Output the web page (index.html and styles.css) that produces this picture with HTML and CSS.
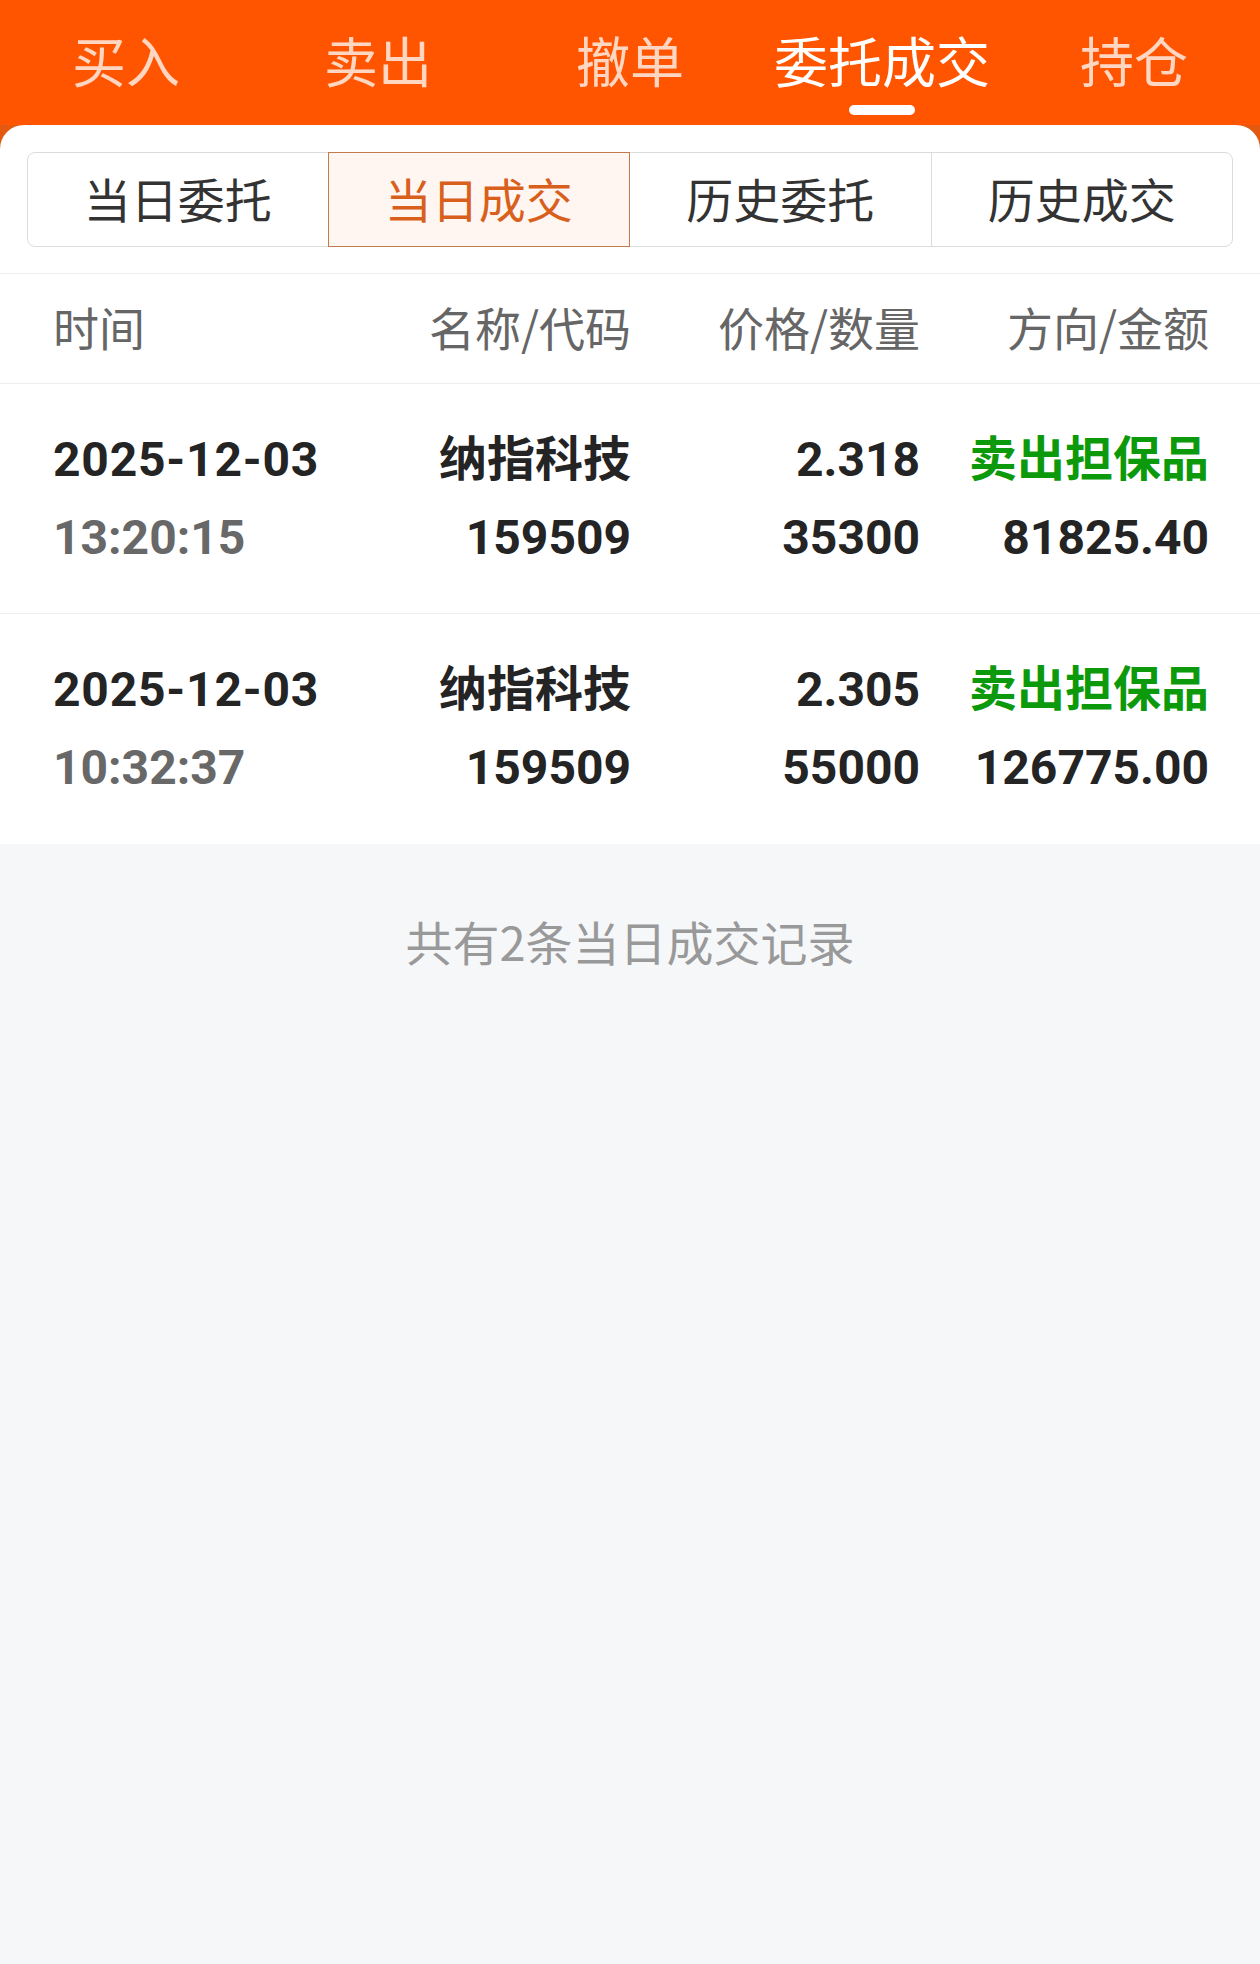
FILE: index.html
```html
<!DOCTYPE html>
<html lang="zh-CN">
<head>
    <meta charset="UTF-8">
    <meta name="viewport" content="width=device-width, initial-scale=1.0">
    <title>委托成交</title>
    <link rel="stylesheet" href="styles.css">
</head>
<body>
    <div class="trade-tabs">
        <div class="trade-tab">买入</div>
        <div class="trade-tab">卖出</div>
        <div class="trade-tab">撤单</div>
        <div class="trade-tab active">委托成交</div>
        <div class="trade-tab">持仓</div>
    </div>

    <div class="card-wrap">
        <div class="card">
            <div class="segment-bar">
                <div class="segment">
                    <div class="segment-item">当日委托</div>
                    <div class="segment-item active">当日成交</div>
                    <div class="segment-item">历史委托</div>
                    <div class="segment-item">历史成交</div>
                </div>
            </div>

            <div class="table-head">
                <div>时间</div>
                <div class="right">名称/代码</div>
                <div class="right">价格/数量</div>
                <div class="right">方向/金额</div>
            </div>

            <div class="deal-row">
                <div class="cell">
                    <div class="strong date">2025-12-03</div>
                    <div class="muted">13:20:15</div>
                </div>
                <div class="cell right">
                    <div class="strong">纳指科技</div>
                    <div class="strong">159509</div>
                </div>
                <div class="cell right">
                    <div class="strong">2.318</div>
                    <div class="strong">35300</div>
                </div>
                <div class="cell right">
                    <div class="strong sell">卖出担保品</div>
                    <div class="strong">81825.40</div>
                </div>
            </div>

            <div class="deal-row">
                <div class="cell">
                    <div class="strong date">2025-12-03</div>
                    <div class="muted">10:32:37</div>
                </div>
                <div class="cell right">
                    <div class="strong">纳指科技</div>
                    <div class="strong">159509</div>
                </div>
                <div class="cell right">
                    <div class="strong">2.305</div>
                    <div class="strong">55000</div>
                </div>
                <div class="cell right">
                    <div class="strong sell">卖出担保品</div>
                    <div class="strong">126775.00</div>
                </div>
            </div>
        </div>
    </div>

    <div class="summary">共有2条当日成交记录</div>
</body>
</html>
```

FILE: styles.css
```css
body {
    margin: 0;
    padding: 0;
    background: #f6f7f9;
    font-family: Roboto, "Noto Sans CJK SC", sans-serif;
    min-height: 100vh;
}

/* top tabs */
.trade-tabs {
    display: grid;
    grid-template-columns: repeat(5, 1fr);
    height: 125px;
    background: #ff5500;
}

.trade-tab {
    position: relative;
    text-align: center;
    font-family: "Noto Sans CJK SC", sans-serif;
    font-size: 54px;
    line-height: 119px;
    color: rgba(255, 255, 255, 0.76);
}

.trade-tab.active {
    color: #fff;
}

.trade-tab.active::after {
    content: "";
    position: absolute;
    left: 50%;
    top: 105px;
    width: 66px;
    height: 10px;
    margin-left: -33px;
    border-radius: 5px;
    background: #fff;
}

/* white card */
.card-wrap {
    background: #e2590f;
}

.card {
    background: #fff;
    border-radius: 24px 24px 0 0;
}

.segment-bar {
    padding: 27px 27px 26px;
    border-bottom: 1px solid #eeeeee;
}

.segment {
    display: grid;
    grid-template-columns: repeat(4, 1fr);
}

.segment-item {
    position: relative;
    margin-left: -1px;
    border: 1px solid #dcdcdc;
    text-align: center;
    font-family: "Noto Sans CJK SC", sans-serif;
    font-size: 47px;
    line-height: 89px;
    padding-bottom: 4px;
    color: #333;
}

.segment-item:first-child {
    margin-left: 0;
    border-radius: 8px 0 0 8px;
}

.segment-item:last-child {
    border-radius: 0 8px 8px 0;
}

.segment-item.active {
    z-index: 1;
    border-color: #c47a4c;
    background: #fff6f1;
    color: #d8601c;
}

/* table */
.table-head,
.deal-row {
    display: grid;
    grid-template-columns: repeat(4, 1fr);
    padding: 0 51px 0 53px;
    border-bottom: 1px solid #eeeeee;
}

.table-head {
    height: 109px;
    line-height: 105px;
    font-family: "Noto Sans CJK SC", sans-serif;
    font-size: 46px;
    color: #666;
}

.right {
    text-align: right;
}

.deal-row {
    padding-top: 37px;
    padding-bottom: 36px;
    font-size: 48px;
    line-height: 78px;
    font-weight: bold;
}

.deal-row:last-child {
    border-bottom: none;
    padding-bottom: 37px;
}

.strong {
    color: #242424;
}

.date {
    letter-spacing: 0.8px;
}

.muted {
    color: #686868;
}

.sell {
    color: #0c9a0c;
}

.summary {
    padding-top: 57px;
    text-align: center;
    font-family: "Noto Sans CJK SC", sans-serif;
    font-size: 47px;
    line-height: 80px;
    color: #999;
}
```
